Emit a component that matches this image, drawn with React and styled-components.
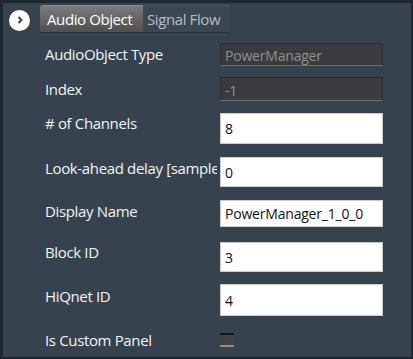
import React from "react";
import styled, { createGlobalStyle } from "styled-components";

const Global = createGlobalStyle`
  html, body { margin: 0; padding: 0; background: #36434e; }
  body { font-family: "Open Sans", "Noto Sans", sans-serif; }
`;

const Frame = styled.div`
  width: 413px;
  height: 359px;
  box-sizing: border-box;
  background: #36434e;
  border-top: 3px solid #1e2830;
  border-left: 3px solid #1e2830;
  border-right: 2px solid #1e2830;
  border-bottom: 2px solid #1e2830;
  overflow: hidden;
  display: flex;
  flex-direction: column;
`;

const Header = styled.div`
  display: flex;
  align-items: flex-end;
  height: 30px;
  padding-left: 6px;
`;

const RoundButton = styled.div`
  width: 21px;
  height: 21px;
  border-radius: 50%;
  background: #fbfbfb;
  display: flex;
  align-items: center;
  justify-content: center;
  align-self: center;
  margin-top: 4px;
  margin-right: 10px;
`;

const Tabs = styled.div`
  display: flex;
  height: 27px;
  border-bottom: 1px solid #28333b;
`;

const Tab = styled.div`
  box-sizing: border-box;
  height: 27px;
  display: flex;
  align-items: center;
  padding: 0 ${(p) => (p.$active ? "10px 0 7px" : "8px 0 4px")};
  font-size: 15px;
  letter-spacing: -0.4px;
  color: ${(p) => (p.$active ? "#ffffff" : "#b9bec3")};
  background: ${(p) =>
    p.$active ? "linear-gradient(#7b7b7b, #4f4f4f)" : "#3a4853"};
  border-top: 1px solid ${(p) => (p.$active ? "#8a8a8a" : "#4a5661")};
  border-radius: ${(p) => (p.$active ? "3px 0 0 0" : "0")};
  width: ${(p) => p.$w}px;
`;

const Form = styled.div`
  display: flex;
  flex-direction: column;
  padding: 10px 0 0 42px;
`;

const Row = styled.div`
  display: grid;
  grid-template-columns: 175px 163px;
  height: ${(p) => p.$h}px;
  margin-bottom: ${(p) => p.$gap}px;
`;

const Label = styled.div`
  min-width: 0;
  font-size: 15px;
  letter-spacing: -0.35px;
  color: #f2f4f5;
  white-space: nowrap;
  overflow: hidden;
  margin-right: 3px;
  padding-top: ${(p) => p.$top}px;
  line-height: 19px;
  height: 24px;
`;

const Field = styled.div`
  box-sizing: border-box;
  height: ${(p) => p.$h}px;
  display: flex;
  align-items: center;
  padding-left: 4px;
  font-size: 14px;
  letter-spacing: -0.2px;
  ${(p) =>
    p.$readonly
      ? `
    background: #3a3b3c;
    color: #8e9092;
    border: 1px solid #2b2d2f;
    border-bottom-color: #6f7173;
    padding-top: 2px;
  `
      : `
    background: #ffffff;
    color: #111111;
    border: 1px solid #c9ccce;
    padding-top: 0;
  `}
`;

const Check = styled.div`
  box-sizing: border-box;
  width: 14px;
  height: 14px;
  margin-top: 6px;
  background: #3f4346;
  border-top: 2px solid #161616;
  border-bottom: 2px solid #8d8f91;
`;

const rows = [
  { label: "AudioObject Type", value: "PowerManager", ro: true, h: 23, gap: 11, top: 2 },
  { label: "Index", value: "-1", ro: true, h: 24, gap: 12, top: 3 },
  { label: "# of Channels", value: "8", h: 31, gap: 13, top: 1 },
  { label: "Look-ahead delay [samples]", value: "0", h: 30, gap: 13, top: 2 },
  { label: "Display Name", value: "PowerManager_1_0_0", h: 27, gap: 15, top: 2 },
  { label: "Block ID", value: "3", h: 30, gap: 12, top: 1 },
  { label: "HiQnet ID", value: "4", h: 32, gap: 11, top: 3 },
];

export default function App() {
  return (
    <>
      <Global />
      <Frame>
        <Header>
          <RoundButton>
            <svg width="10" height="10" viewBox="0 0 10 10">
              <path d="M3.5 2 L6.5 5 L3.5 8" stroke="#3a3f44" strokeWidth="2" fill="none" />
            </svg>
          </RoundButton>
          <Tabs>
            <Tab $active $w={103}>Audio Object</Tab>
            <Tab $w={87}>Signal Flow</Tab>
          </Tabs>
        </Header>
        <Form>
          {rows.map((r) => (
            <Row key={r.label} $h={r.h} $gap={r.gap}>
              <Label $top={r.top}>{r.label}</Label>
              <Field $readonly={r.ro} $h={r.h}>{r.value}</Field>
            </Row>
          ))}
          <Row $h={24} $gap={0}>
            <Label $top={4}>Is Custom Panel</Label>
            <Check />
          </Row>
        </Form>
      </Frame>
    </>
  );
}
